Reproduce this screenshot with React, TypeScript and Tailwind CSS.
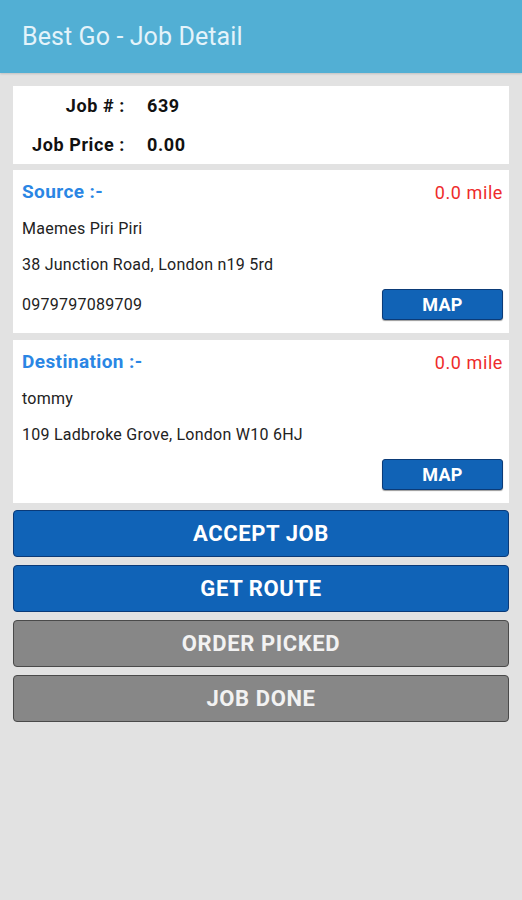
const font = { fontFamily: 'Roboto, "Liberation Sans", sans-serif' };

function MapButton() {
  return (
    <button className="h-[31px] w-[121px] rounded-[3px] border border-[#0b3b78] bg-[#1163b6] text-[18px] font-bold tracking-[0.3px] text-white shadow-[0_1px_1px_rgba(0,0,0,0.4)]">
      MAP
    </button>
  );
}

interface PlaceCardProps {
  title: string;
  name: string;
  address: string;
  phone?: string;
}

function PlaceCard({ title, name, address, phone }: PlaceCardProps) {
  return (
    <div className="bg-white pl-[9px] pr-[6px] pb-[13px] pt-[9px]">
      <div className="flex h-[26px] items-center justify-between">
        <span className="text-[19px] font-bold tracking-[0.4px] text-[#2a86e4]">{title}</span>
        <span className="text-[18px] tracking-[0.6px] text-[#ee2b2b]">0.0 mile</span>
      </div>
      <div className="mt-[6px] flex h-[36px] items-center text-[16px] tracking-[0.25px] text-[#222]">{name}</div>
      <div className="flex h-[36px] items-center text-[16px] tracking-[0.25px] text-[#222]">{address}</div>
      <div className="mt-[6px] flex h-[31px] items-center justify-between">
        <span className="text-[16px] tracking-[0.25px] text-[#222]">{phone}</span>
        <MapButton />
      </div>
    </div>
  );
}

function ActionButton({ label, active }: { label: string; active: boolean }) {
  return (
    <button
      className={
        active
          ? 'h-[47px] w-full rounded-[4px] border border-[#0a3a78] bg-[#1063b7] text-[22px] font-bold tracking-[0.6px] text-white'
          : 'h-[47px] w-full rounded-[4px] border border-[#4a4a4a] bg-[#878787] text-[22px] font-bold tracking-[0.6px] text-[#f2f2f2]'
      }
    >
      {label}
    </button>
  );
}

export default function App() {
  return (
    <div className="min-h-[900px] bg-[#e2e2e2]" style={font}>
      {/* Toolbar */}
      <div className="flex h-[73px] items-center bg-[#52afd4] pl-[22px] shadow-[0_1px_2px_rgba(0,0,0,0.15)]">
        <h1 className="text-[25px] font-normal tracking-[0.1px] text-[#e4f3fa]">Best Go - Job Detail</h1>
      </div>

      <div className="mx-[13px] mt-[13px] flex flex-col">
        {/* Job info */}
        <div className="bg-white">
          <div className="flex h-[39px] items-center text-[18px] font-bold tracking-[0.6px] text-[#111]">
            <span className="w-[112px] text-right">Job # :</span>
            <span className="ml-[22px]">639</span>
          </div>
          <div className="flex h-[39px] items-center text-[18px] font-bold tracking-[0.6px] text-[#111]">
            <span className="w-[112px] text-right">Job Price :</span>
            <span className="ml-[22px]">0.00</span>
          </div>
        </div>

        <div className="mt-[6px]">
          <PlaceCard
            title="Source :-"
            name="Maemes Piri Piri"
            address="38 Junction Road, London n19 5rd"
            phone="0979797089709"
          />
        </div>

        <div className="mt-[7px]">
          <PlaceCard title="Destination :-" name="tommy" address="109 Ladbroke Grove, London W10 6HJ" />
        </div>

        {/* Actions */}
        <div className="mt-[7px] flex flex-col gap-[8px]">
          <ActionButton label="ACCEPT JOB" active />
          <ActionButton label="GET ROUTE" active />
          <ActionButton label="ORDER PICKED" active={false} />
          <ActionButton label="JOB DONE" active={false} />
        </div>
      </div>
    </div>
  );
}
